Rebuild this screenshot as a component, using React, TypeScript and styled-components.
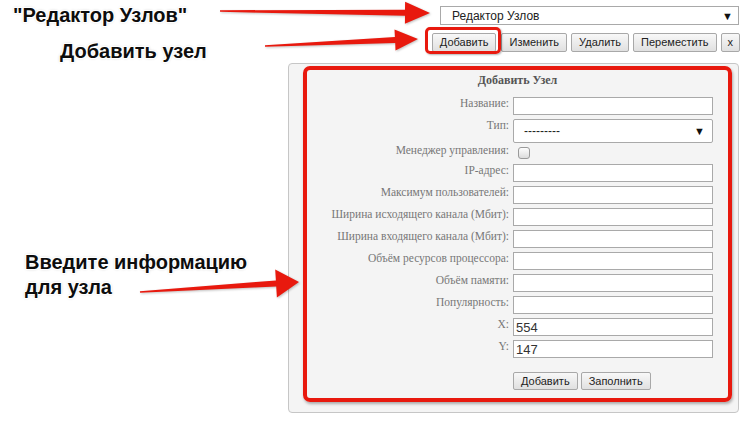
import React from "react";
import styled, { createGlobalStyle } from "styled-components";

const RED = "#e8190e";

const GlobalStyle = createGlobalStyle`
  html, body {
    margin: 0;
    padding: 0;
    background: #fff;
  }
`;

type Pt = [number, number];

interface ArrowSpec {
  tail: Pt;
  tip: Pt;
  headLen: number;
  headHalf: number;
  neck: number;
}

const arrows: ArrowSpec[] = [
  { tail: [220, 11], tip: [430, 13], headLen: 25, headHalf: 11, neck: 6 },
  { tail: [265, 46], tip: [418, 39], headLen: 23, headHalf: 10.5, neck: 6 },
  { tail: [140, 292], tip: [299, 282], headLen: 23, headHalf: 14, neck: 6 },
];

function arrowPoints({ tail, tip, headLen, headHalf, neck }: ArrowSpec) {
  const dx = tip[0] - tail[0];
  const dy = tip[1] - tail[1];
  const len = Math.hypot(dx, dy);
  const ux = dx / len;
  const uy = dy / len;
  const nx = -uy;
  const ny = ux;
  const bx = tip[0] - ux * headLen;
  const by = tip[1] - uy * headLen;
  const p = (x: number, y: number) => `${x.toFixed(1)},${y.toFixed(1)}`;
  return [
    p(tail[0] + nx * 0.8, tail[1] + ny * 0.8),
    p(bx + (nx * neck) / 2, by + (ny * neck) / 2),
    p(bx + nx * headHalf, by + ny * headHalf),
    p(tip[0], tip[1]),
    p(bx - nx * headHalf, by - ny * headHalf),
    p(bx - (nx * neck) / 2, by - (ny * neck) / 2),
    p(tail[0] - nx * 0.8, tail[1] - ny * 0.8),
  ].join(" ");
}

const fields = [
  "Максимум пользователей:",
  "Ширина исходящего канала (Мбит):",
  "Ширина входящего канала (Мбит):",
  "Объём ресурсов процессора:",
  "Объём памяти:",
  "Популярность:",
];

const App: React.FC = () => (
  <Page>
    <GlobalStyle />
    <Notes>
      <Note $indent={13} $top={0}>"Редактор Узлов"</Note>
      <Note $indent={60} $top={13}>Добавить узел</Note>
      <Note $indent={25} $top={187} $lh={25}>
        Введите информацию
        <br />
        для узла
      </Note>
    </Notes>

    <Editor>
      <NodeSelect>
        <span>Редактор Узлов</span>
        <Caret>▼</Caret>
      </NodeSelect>

      <Toolbar>
        <Marked>
          <Button>Добавить</Button>
        </Marked>
        <Button>Изменить</Button>
        <Button>Удалить</Button>
        <Button>Переместить</Button>
        <Button $pad={6}>x</Button>
      </Toolbar>

      <Panel>
        <FormBox>
          <FormTitle>Добавить Узел</FormTitle>
          <FieldGrid>
            <Label>Название:</Label>
            <Input readOnly value="" />

            <Label>Тип:</Label>
            <TypeSelect>
              <span>---------</span>
              <Caret>▼</Caret>
            </TypeSelect>

            <Label $shift={-3}>Менеджер управления:</Label>
            <CheckRow>
              <Check />
            </CheckRow>

            <Label>IP-адрес:</Label>
            <Input readOnly value="" />

            {fields.map((name) => (
              <React.Fragment key={name}>
                <Label>{name}</Label>
                <Input readOnly value="" />
              </React.Fragment>
            ))}

            <Label>X:</Label>
            <Input readOnly value="554" />

            <Label>Y:</Label>
            <Input readOnly value="147" />

            <Actions>
              <Button $h={18}>Добавить</Button>
              <Button $h={18}>Заполнить</Button>
            </Actions>
          </FieldGrid>
        </FormBox>
      </Panel>
    </Editor>

    <Overlay width="750" height="431" viewBox="0 0 750 431">
      {arrows.map((a, i) => (
        <polygon key={i} points={arrowPoints(a)} fill={RED} />
      ))}
    </Overlay>
  </Page>
);

const Page = styled.div`
  position: relative;
  display: flex;
  width: 750px;
  height: 431px;
  overflow: hidden;
  background: #fff;
`;

const Notes = styled.div`
  flex: none;
  width: 288px;
  display: flex;
  flex-direction: column;
  align-items: flex-start;
  padding-top: 4px;
`;

const Note = styled.div<{ $indent: number; $top: number; $lh?: number }>`
  margin-left: ${(p) => p.$indent}px;
  margin-top: ${(p) => p.$top}px;
  font-family: "Liberation Sans", Arial, sans-serif;
  font-weight: bold;
  font-size: 20px;
  line-height: ${(p) => p.$lh ?? 23}px;
  color: #0d0d0d;
  white-space: nowrap;
  text-shadow: 1px 1px 0 #fff, -1px -1px 0 #fff, 1px -1px 0 #fff,
    -1px 1px 0 #fff, 0 0 2px #fff, 0 0 3px rgba(0, 0, 0, 0.3);
`;

const Editor = styled.div`
  flex: none;
  width: 452px;
  padding-top: 6px;
  display: flex;
  flex-direction: column;
  align-items: flex-end;
`;

const NodeSelect = styled.div`
  box-sizing: border-box;
  width: 299px;
  height: 19px;
  margin-right: 1px;
  padding: 0 5px 0 11px;
  display: flex;
  align-items: center;
  justify-content: space-between;
  border: 1px solid #a9a9a9;
  background: #fff;
  font-family: "Liberation Sans", Arial, sans-serif;
  font-size: 12px;
  color: #222;
`;

const Caret = styled.span`
  font-size: 11px;
  color: #111;
`;

const Toolbar = styled.div`
  display: flex;
  gap: 4px;
  margin-top: 8px;
`;

const Marked = styled.span`
  position: relative;
  display: flex;
  margin-right: 1px;

  &::after {
    content: "";
    position: absolute;
    top: -6px;
    right: -5px;
    bottom: -2px;
    left: -7px;
    border: 3px solid ${RED};
    border-radius: 5px;
    box-shadow: 1px 1px 2px rgba(0, 0, 0, 0.3);
    pointer-events: none;
  }
`;

const Button = styled.button<{ $h?: number; $pad?: number }>`
  box-sizing: border-box;
  height: ${(p) => p.$h ?? 19}px;
  padding: 0 ${(p) => p.$pad ?? 7}px;
  border: 1px solid #a8a8a8;
  border-radius: 2px;
  background: linear-gradient(#f8f8f8, #e0e0e0);
  font-family: "Liberation Sans", Arial, sans-serif;
  font-size: 11px;
  line-height: 1;
  color: #222;
`;

const Panel = styled.div`
  box-sizing: border-box;
  display: flex;
  width: 451px;
  height: 350px;
  margin-top: 11px;
  margin-right: 1px;
  padding: 2px 6px 10px 14px;
  border: 1px solid #c6c6c6;
  border-radius: 4px;
  background: #f4f4f4;
`;

const FormBox = styled.div`
  flex: 1;
  border: 4px solid ${RED};
  border-radius: 7px;
  box-shadow: 1px 2px 3px rgba(0, 0, 0, 0.3);
`;

const FormTitle = styled.div`
  padding-top: 3px;
  margin-bottom: 10px;
  text-align: center;
  font-family: "Liberation Serif", "Times New Roman", serif;
  font-weight: bold;
  font-size: 12px;
  line-height: 14px;
  color: #555;
`;

const FieldGrid = styled.div`
  display: grid;
  grid-template-columns: 1fr 200px;
  column-gap: 4px;
  row-gap: 4px;
  padding-right: 15px;
`;

const Label = styled.label<{ $shift?: number }>`
  margin-top: ${(p) => p.$shift ?? 0}px;
  text-align: right;
  white-space: nowrap;
  font-family: "Liberation Serif", "Times New Roman", serif;
  font-size: 11.5px;
  line-height: 12px;
  color: #777;
`;

const Input = styled.input`
  box-sizing: border-box;
  width: 100%;
  height: 18px;
  margin: 0;
  padding: 0 2px;
  border: 1px solid #a9a9a9;
  background: #fff;
  font-family: "Liberation Sans", Arial, sans-serif;
  font-size: 13px;
  color: #333;
  outline: none;
`;

const TypeSelect = styled.div`
  box-sizing: border-box;
  height: 24px;
  padding: 0 7px 0 10px;
  display: flex;
  align-items: center;
  justify-content: space-between;
  border: 1px solid #a9a9a9;
  border-radius: 2px;
  background: #fff;
  font-family: "Liberation Sans", Arial, sans-serif;
  font-size: 12px;
  color: #222;
`;

const CheckRow = styled.div`
  height: 13px;
  display: flex;
  align-items: flex-start;
`;

const Check = styled.span`
  box-sizing: border-box;
  width: 12px;
  height: 12px;
  margin-left: 5px;
  border: 1px solid #9a9a9a;
  border-radius: 3px;
  background: linear-gradient(#fdfdfd, #dcdcdc);
`;

const Actions = styled.div`
  grid-column: 2;
  display: flex;
  gap: 3px;
  margin-top: 10px;
`;

const Overlay = styled.svg`
  position: absolute;
  top: 0;
  left: 0;
  pointer-events: none;
  filter: drop-shadow(1px 1px 1px rgba(0, 0, 0, 0.25));
`;

export default App;
